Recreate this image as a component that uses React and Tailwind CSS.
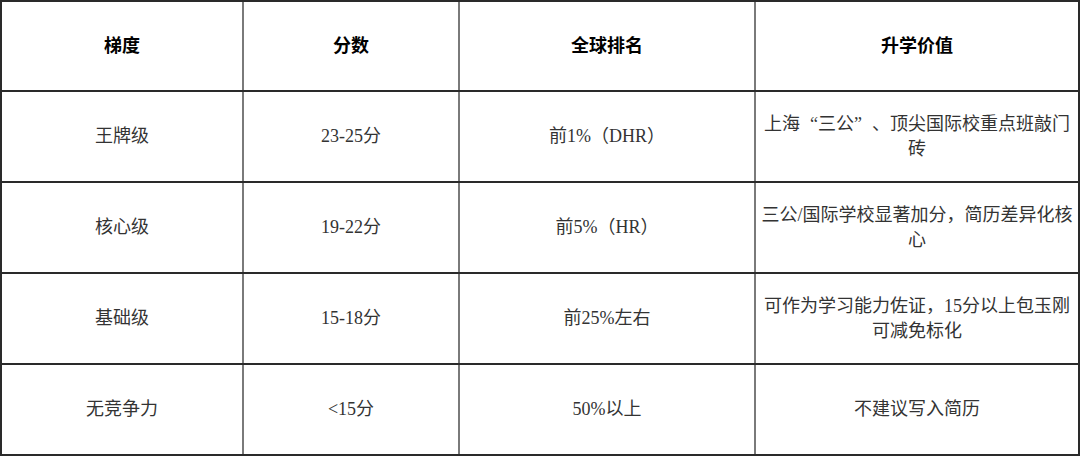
import React from 'react';

const headers = ['梯度', '分数', '全球排名', '升学价值'];

// full-width curly quotes, as the reference's CJK font sets them
const Q = ({ c, side }) => (
  <span className={`inline-block w-[18px] ${side === 'l' ? 'text-right' : 'text-left'}`}>{c}</span>
);

const rows = [
  [
    '王牌级',
    '23-25分',
    '前1%（DHR）',
    <>
      上海<Q c="“" side="l" />三公<Q c="”" side="r" />、顶尖国际校重点班敲门砖
    </>,
  ],
  ['核心级', '19-22分', '前5%（HR）', '三公/国际学校显著加分，简历差异化核心'],
  ['基础级', '15-18分', '前25%左右', '可作为学习能力佐证，15分以上包玉刚可减免标化'],
  ['无竞争力', '<15分', '50%以上', '不建议写入简历'],
];

// column widths include the 2px right rule
const colW = ['w-[242px]', 'w-[216px]', 'w-[296px]', 'w-[322px]'];
const rowH = ['h-[91px]', 'h-[91px]', 'h-[91px]', 'h-[89px]'];

const font = "font-['Liberation_Serif','Noto_Sans_CJK_SC',serif]";

export default function App() {
  return (
    <div className={`w-[1080px] h-[456px] bg-white border-2 border-[#2a2a2a] flex flex-col ${font}`}>
      {/* Header */}
      <div className="h-[90px] flex border-b-2 border-[#2a2a2a]">
        {headers.map((h, i) => (
          <div
            key={h}
            className={`${colW[i]} shrink-0 flex items-center justify-center text-[18px] font-bold text-black ${
              i < 3 ? 'border-r-2 border-[#7a7a7a]' : ''
            }`}
          >
            {h}
          </div>
        ))}
      </div>

      {/* Body */}
      {rows.map((r, ri) => (
        <div
          key={r[0]}
          className={`${rowH[ri]} flex ${ri < 3 ? 'border-b-2 border-[#2a2a2a]' : ''}`}
        >
          {r.map((c, i) => (
            <div
              key={i}
              className={`${colW[i]} shrink-0 flex items-center justify-center text-center text-[18px] leading-[25px] text-[#333] ${
                i < 3 ? 'border-r-2 border-[#7a7a7a]' : ''
              }`}
            >
              <span>{c}</span>
            </div>
          ))}
        </div>
      ))}
    </div>
  );
}
